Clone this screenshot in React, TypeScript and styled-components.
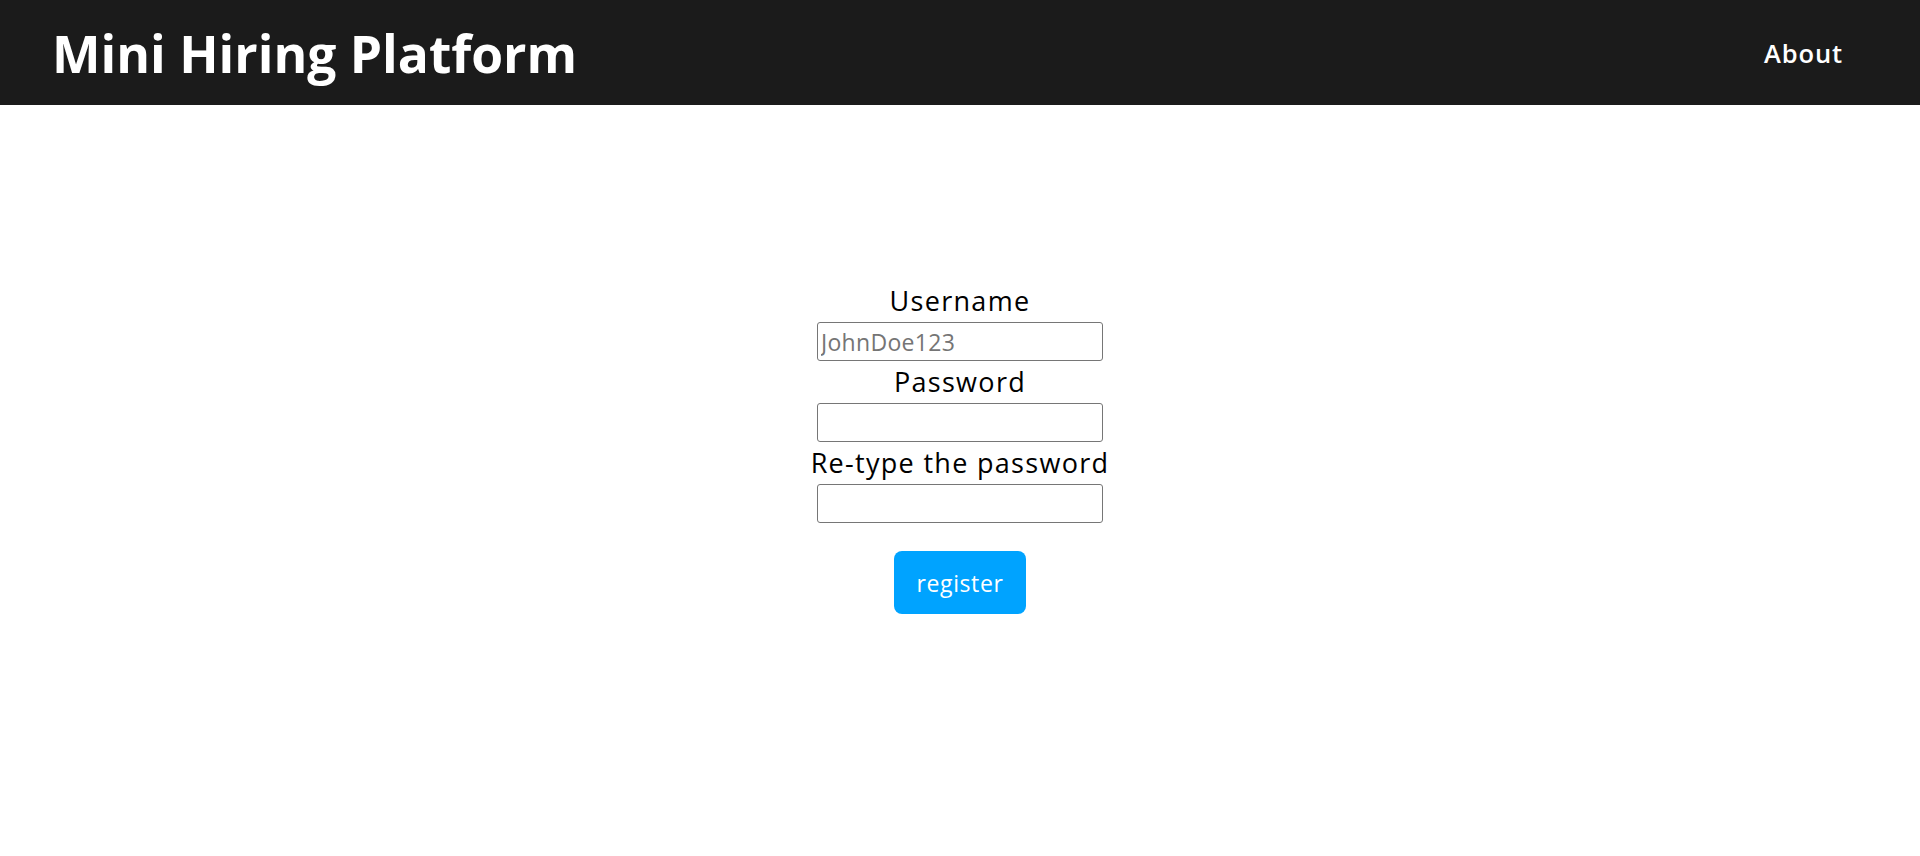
import React from "react";
import styled, { createGlobalStyle } from "styled-components";

const GlobalStyle = createGlobalStyle`
  * { box-sizing: border-box; }
  html, body { margin: 0; padding: 0; background: #ffffff; }
  body { font-family: "Open Sans", "Noto Sans", sans-serif; color: #000; }
`;

const Header = styled.header`
  height: 105px;
  background: #1b1b1b;
  display: flex;
  align-items: center;
  justify-content: space-between;
  padding: 0 77px 0 52px;
`;

const Title = styled.h1`
  margin: 0;
  font-size: 51.5px;
  font-weight: 700;
  color: #ffffff;
`;

const NavLink = styled.a`
  color: #ffffff;
  font-size: 25.5px;
  font-weight: 600;
  letter-spacing: 0.9px;
  text-decoration: none;
  cursor: pointer;
`;

const Main = styled.main`
  display: flex;
  justify-content: center;
  padding-top: 175px;
`;

const Form = styled.form`
  display: flex;
  flex-direction: column;
  align-items: center;
`;

const Label = styled.label`
  font-size: 27px;
  letter-spacing: 1.3px;
  line-height: 42px;
  height: 42px;
  color: #000;
`;

const Input = styled.input`
  width: 286px;
  height: 39px;
  border: 1px solid #767676;
  border-radius: 3px;
  padding: 0 3px;
  font-family: inherit;
  font-size: 23px;
  letter-spacing: 0.3px;
  color: #000;
  &::placeholder { color: #757575; }
`;

const Button = styled.button`
  margin-top: 28px;
  width: 132px;
  height: 63px;
  border: none;
  border-radius: 8px;
  background: #00a3ff;
  color: #ffffff;
  font-family: inherit;
  font-size: 23px;
  letter-spacing: 0.6px;
  cursor: pointer;
`;

export default function App() {
  return (
    <>
      <GlobalStyle />
      <Header>
        <Title>Mini Hiring Platform</Title>
        <NavLink>About</NavLink>
      </Header>
      <Main>
        <Form onSubmit={(e) => e.preventDefault()}>
          <Label htmlFor="username">Username</Label>
          <Input id="username" type="text" placeholder="JohnDoe123" />
          <Label htmlFor="password">Password</Label>
          <Input id="password" type="password" />
          <Label htmlFor="password2">Re-type the password</Label>
          <Input id="password2" type="password" />
          <Button type="submit">register</Button>
        </Form>
      </Main>
    </>
  );
}
